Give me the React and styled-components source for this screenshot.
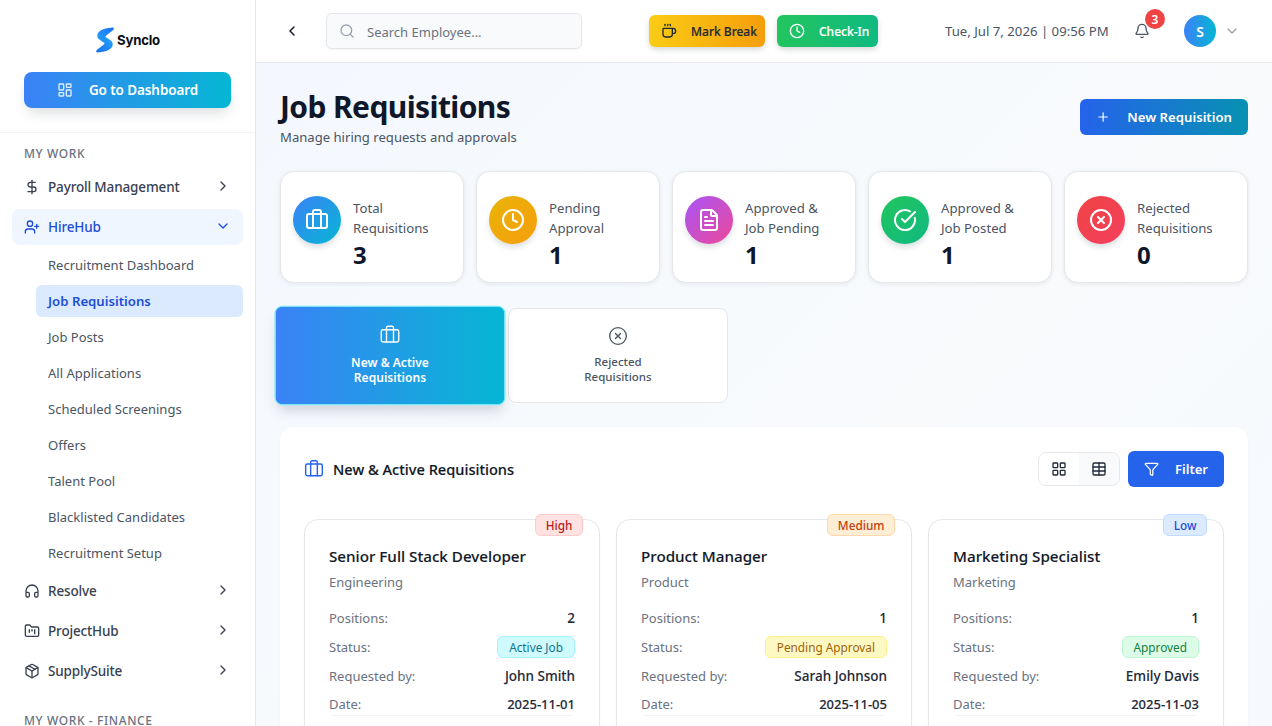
import React from "react";
import styled, { createGlobalStyle } from "styled-components";
import {
  Bell,
  Briefcase,
  ChevronDown,
  ChevronLeft,
  ChevronRight,
  CircleCheckBig,
  CircleX,
  Clock,
  Coffee,
  DollarSign,
  FileText,
  FolderKanban,
  Funnel,
  Headphones,
  LayoutDashboard,
  LayoutGrid,
  Package,
  Plus,
  Search,
  Table,
  UserPlus,
} from "lucide-react";

const GlobalStyle = createGlobalStyle`
  * { box-sizing: border-box; }
  html, body { margin: 0; padding: 0; height: 100%; overflow: hidden; }
  body { font-family: "Noto Sans", "Liberation Sans", sans-serif; color: #0f172a; }
`;

const Shell = styled.div`
  display: flex;
  width: 100%;
  height: 100vh;
  overflow: hidden;
`;

const Sidebar = styled.aside`
  width: 256px;
  flex-shrink: 0;
  background: #fff;
  border-right: 1px solid #e5e7eb;
  overflow: hidden;
`;

const Brand = styled.div`
  height: 133px;
  padding: 24px 24px 0;
  border-bottom: 1px solid #f1f5f9;
`;

const LogoRow = styled.div`
  height: 32px;
  display: flex;
  align-items: center;
  justify-content: center;
  gap: 3px;
  margin-bottom: 16px;
  padding-left: 1px;
`;

const LogoText = styled.span`
  font-family: "Inter", sans-serif;
  font-size: 13.2px;
  font-weight: 700;
  color: #0b0f19;
  letter-spacing: -0.2px;
  margin-top: -1px;
`;

const DashboardButton = styled.button`
  width: 207px;
  height: 36px;
  border: 0;
  border-radius: 8px;
  background: linear-gradient(90deg, #3b82f6, #06b6d4);
  color: #fff;
  font: 600 13.5px "Noto Sans", sans-serif;
  letter-spacing: -0.1px;
  display: flex;
  align-items: center;
  justify-content: center;
  gap: 16px;
  box-shadow: 0 8px 14px -4px rgba(15, 23, 42, 0.16);
  svg { opacity: 0.85; }
`;

const SectionLabel = styled.div`
  margin: ${(p) => p.$top}px 0 0 24px;
  height: 18px;
  line-height: 18px;
  font-size: 12px;
  font-weight: 500;
  letter-spacing: 0.6px;
  color: #6b7280;
`;

const Nav = styled.nav`
  padding: 0 12px;
  margin-top: ${(p) => p.$top || 0}px;
  display: flex;
  flex-direction: column;
`;

const NavItem = styled.div`
  height: 36px;
  margin-bottom: 4px;
  padding: 0 12px;
  border-radius: 8px;
  display: flex;
  align-items: center;
  gap: 8px;
  font-size: 13.5px;
  letter-spacing: -0.15px;
  font-weight: 500;
  color: ${(p) => (p.$open ? "#1d4ed8" : "#374151")};
  background: ${(p) => (p.$open ? "#eff6ff" : "transparent")};
  span { flex: 1; margin-top: -1px; }
  svg:last-child { margin-top: -3px; }
`;

const SubNav = styled.div`
  padding-left: 24px;
  display: flex;
  flex-direction: column;
`;

const SubItem = styled.div`
  height: 32px;
  margin-bottom: 4px;
  padding: 0 12px;
  border-radius: 6px;
  display: flex;
  align-items: center;
  font-size: ${(p) => (p.$active ? 13.2 : 13)}px;
  font-weight: ${(p) => (p.$active ? 600 : 400)};
  color: ${(p) => (p.$active ? "#1d4ed8" : "#4b5563")};
  background: ${(p) => (p.$active ? "#dbeafe" : "transparent")};
`;

const Column = styled.div`
  flex: 1;
  min-width: 0;
  display: flex;
  flex-direction: column;
`;

const Topbar = styled.header`
  height: 63px;
  flex-shrink: 0;
  background: #fff;
  border-bottom: 1px solid #e5e7eb;
  display: flex;
  align-items: center;
  padding: 0 0 0 28px;
  & > * { flex-shrink: 0; }
`;

const BackButton = styled.div`
  width: 16px;
  display: flex;
  color: #111827;
  margin-right: 26px;
`;

const SearchBox = styled.div`
  width: 256px;
  height: 36px;
  border: 1px solid #e5e7eb;
  border-radius: 6px;
  background: #f9fafb;
  box-shadow: 0 1px 2px rgba(15, 23, 42, 0.05);
  display: flex;
  align-items: center;
  gap: 12px;
  padding: 0 12px;
  svg { color: #9ca3af; }
`;

const SearchText = styled.span`
  margin-top: 2px;
  font-size: 13px;
  line-height: 20px;
  color: #6b7280;
`;

const ActionButton = styled.div`
  width: ${(p) => p.$w}px;
  height: 32px;
  border-radius: 6px;
  display: flex;
  align-items: center;
  font-size: 12px;
  font-weight: 500;
  white-space: nowrap;
  padding-left: 12px;
  gap: 14px;
  background: ${(p) => p.$bg};
  color: ${(p) => p.$color};
  margin-left: ${(p) => p.$left}px;
  box-shadow: 0 3px 6px -1px rgba(15, 23, 42, 0.2);
  -webkit-text-stroke: 0.2px currentColor;
`;

const DateText = styled.div`
  margin-left: 67px;
  width: 164px;
  font-size: 13.2px;
  color: #4b5563;
  white-space: nowrap;
`;

const BellWrap = styled.div`
  position: relative;
  margin-left: 25px;
  display: flex;
  color: #4b5563;
`;

const BellBadge = styled.span`
  position: absolute;
  top: -14px;
  left: 11px;
  width: 20px;
  height: 20px;
  border-radius: 50%;
  background: #ef4444;
  color: #fff;
  font-size: 12px;
  font-weight: 600;
  display: flex;
  align-items: center;
  justify-content: center;
`;

const Avatar = styled.div`
  margin-left: 34px;
  width: 32px;
  height: 32px;
  border-radius: 50%;
  background: linear-gradient(90deg, #3b82f6, #06b6d4);
  color: #fff;
  font-size: 14px;
  font-weight: 600;
  display: flex;
  align-items: center;
  justify-content: center;
`;

const AvatarCaret = styled.div`
  margin-left: 8px;
  display: flex;
  color: #9ca3af;
`;

const Main = styled.main`
  flex: 1;
  min-height: 0;
  overflow: hidden;
  padding: 24px 24px 0;
  background: linear-gradient(135deg, #f4f8fe 0%, #f8fafc 60%, #f6f9fe 100%);
`;

const PageHead = styled.div`
  display: flex;
  justify-content: space-between;
  align-items: flex-start;
  margin-bottom: 24px;
`;

const Title = styled.h1`
  margin: 0;
  font-size: 30px;
  line-height: 40px;
  font-weight: 700;
  letter-spacing: -0.6px;
  color: #0f172a;
`;

const SubTitle = styled.p`
  margin: 0;
  font-size: 13.1px;
  line-height: 20px;
  color: #4b5563;
`;

const NewButton = styled.div`
  margin-top: 12px;
  width: 168px;
  height: 36px;
  border-radius: 6px;
  background: linear-gradient(90deg, #2563eb, #0891b2);
  color: #fff;
  font-size: 13.2px;
  font-weight: 600;
  white-space: nowrap;
  display: flex;
  align-items: center;
  gap: 17px;
  padding: 0 16px;
`;

const StatsRow = styled.div`
  display: grid;
  grid-template-columns: repeat(5, 1fr);
  gap: 12px;
`;

const StatCard = styled.div`
  height: 112px;
  background: #fff;
  border: 1px solid #e5e7eb;
  border-radius: 14px;
  box-shadow: 0 1px 4px rgba(15, 23, 42, 0.08);
  padding: 24px 12px 0;
  display: flex;
  gap: 12px;
`;

const StatIcon = styled.div`
  width: 48px;
  height: 48px;
  flex-shrink: 0;
  border-radius: 50%;
  background: ${(p) => p.$bg};
  color: #fff;
  display: flex;
  align-items: center;
  justify-content: center;
  box-shadow: 0 4px 6px -1px rgba(15, 23, 42, 0.16);
`;

const StatBody = styled.div`
  margin-top: 2px;
`;

const StatLabel = styled.div`
  font-size: 13.2px;
  line-height: 20px;
  color: #4b5563;
`;

const StatValue = styled.div`
  margin-top: 3px;
  font-size: 24px;
  line-height: 28px;
  font-weight: 700;
  color: #0f172a;
`;

const Tabs = styled.div`
  display: flex;
  gap: 8px;
  margin-top: 24.5px;
`;

const Tab = styled.div`
  width: 220px;
  height: 95px;
  border-radius: 8px;
  display: flex;
  flex-direction: column;
  align-items: center;
  padding-top: 17px;
  font-size: 11.5px;
  line-height: 15px;
  text-align: center;
  font-weight: ${(p) => (p.$active ? 600 : 500)};
  color: ${(p) => (p.$active ? "#fff" : "#4b5563")};
  background: ${(p) => (p.$active ? "linear-gradient(90deg, #3b82f6, #06b6d4)" : "#fff")};
  border: 1px solid ${(p) => (p.$active ? "#67e8f9" : "#e5e7eb")};
  transform: ${(p) => (p.$active ? "scale(1.05)" : "none")};
  box-shadow: ${(p) => (p.$active ? "0 8px 12px -4px rgba(15, 23, 42, 0.18)" : "none")};
  svg { margin-bottom: 8px; }
`;

const Panel = styled.section`
  margin-top: 24.5px;
  min-height: 400px;
  background: #fff;
  border-radius: 14px;
  box-shadow: 0 1px 3px rgba(15, 23, 42, 0.03);
  padding: 24px;
`;

const PanelHead = styled.div`
  display: flex;
  align-items: center;
  height: 36px;
  margin-bottom: 32px;
`;

const PanelTitle = styled.h2`
  margin: 0;
  flex: 1;
  display: flex;
  align-items: center;
  gap: 9px;
  font-size: 14.6px;
  font-weight: 500;
  color: #111827;
  -webkit-text-stroke: 0.15px currentColor;
  svg { color: #2563eb; }
`;

const ViewToggle = styled.div`
  display: flex;
  height: 34px;
  width: 82px;
  border: 1px solid #e5e7eb;
  border-radius: 8px;
  overflow: hidden;
  margin-right: 8px;
`;

const ToggleCell = styled.div`
  flex: 1;
  display: flex;
  align-items: center;
  justify-content: center;
  color: #1f2937;
  background: ${(p) => (p.$muted ? "#f9fafb" : "#fff")};
`;

const FilterButton = styled.div`
  width: 96px;
  height: 36px;
  border-radius: 6px;
  background: #2563eb;
  color: #fff;
  font-size: 13px;
  font-weight: 600;
  display: flex;
  align-items: center;
  gap: 16px;
  padding: 0 16px;
`;

const CardGrid = styled.div`
  display: grid;
  grid-template-columns: repeat(3, 1fr);
  gap: 16px;
`;

const ReqCard = styled.article`
  position: relative;
  height: 260px;
  border: 1px solid #e5e7eb;
  border-radius: 14px;
  padding: 24px;
  background: #fff;
  box-shadow: 0 1px 2px rgba(15, 23, 42, 0.03);
`;

const Priority = styled.span`
  position: absolute;
  top: -6px;
  right: 16px;
  height: 22px;
  padding: 0 9.5px;
  border-radius: 6px;
  border: 1px solid ${(p) => p.$tone.border};
  background: ${(p) => p.$tone.bg};
  color: ${(p) => p.$tone.text};
  font-size: 11.8px;
  font-weight: 500;
  display: flex;
  align-items: center;
`;

const CardTitle = styled.h3`
  margin: 0;
  font-size: 15.2px;
  line-height: 24px;
  font-weight: 500;
  color: #111827;
  -webkit-text-stroke: 0.1px currentColor;
`;

const CardDept = styled.div`
  margin-top: 4px;
  font-size: 13px;
  line-height: 20px;
  color: #6b7280;
`;

const Details = styled.div`
  margin-top: 15px;
  display: flex;
  flex-direction: column;
  gap: 6.8px;
`;

const DetailRow = styled.div`
  height: 22px;
  display: flex;
  align-items: center;
  justify-content: space-between;
  font-size: 13px;
  color: #6b7280;
  ${(p) => p.$last && "box-shadow: 0 4px 0 -3px #f1f5f9;"}
`;

const DetailValue = styled.span`
  font-size: ${(p) => (p.$date ? 13 : 13.5)}px;
  font-weight: 500;
  color: #1f2937;
  -webkit-text-stroke: 0.1px currentColor;
`;

const StatusPill = styled.span`
  height: 22px;
  padding: 0 11px;
  border-radius: 6px;
  border: 1px solid ${(p) => p.$tone.border};
  background: ${(p) => p.$tone.bg};
  color: ${(p) => p.$tone.text};
  font-size: 11.8px;
  display: flex;
  align-items: center;
`;

const SynclogoMark = () => (
  <svg width="18" height="26" viewBox="0 0 18 26" fill="none">
    <defs>
      <linearGradient id="synTop" x1="1" y1="0" x2="0" y2="1">
        <stop offset="0" stopColor="#1d6ff2" />
        <stop offset="1" stopColor="#22a6f5" />
      </linearGradient>
      <linearGradient id="synBottom" x1="1" y1="0" x2="0" y2="1">
        <stop offset="0" stopColor="#1d6ff2" />
        <stop offset="1" stopColor="#22a6f5" />
      </linearGradient>
    </defs>
    <path
      d="M16.5.5C18 .4 18.3 2.2 17 3.2L10.2 8.6C9.2 9.5 9.4 10.6 10.5 11L12 12 7.5 15.5 3 12.2C.6 10.3 1 7 2.6 5.2 6 1.8 11.5.8 16.5.5Z"
      fill="url(#synTop)"
    />
    <path
      d="M16.5.5C18 .4 18.3 2.2 17 3.2L10.2 8.6C9.2 9.5 9.4 10.6 10.5 11L12 12 7.5 15.5 3 12.2C.6 10.3 1 7 2.6 5.2 6 1.8 11.5.8 16.5.5Z"
      fill="url(#synBottom)"
      transform="rotate(180 9 13)"
    />
  </svg>
);

const subLinks = [
  "Recruitment Dashboard",
  "Job Requisitions",
  "Job Posts",
  "All Applications",
  "Scheduled Screenings",
  "Offers",
  "Talent Pool",
  "Blacklisted Candidates",
  "Recruitment Setup",
];

const stats = [
  { icon: Briefcase, bg: "linear-gradient(135deg, #3b82f6, #06b6d4)", lines: ["Total", "Requisitions"], value: 3 },
  { icon: Clock, bg: "linear-gradient(135deg, #eab308, #f59e0b)", lines: ["Pending", "Approval"], value: 1 },
  { icon: FileText, bg: "linear-gradient(135deg, #a855f7, #ec4899)", lines: ["Approved &", "Job Pending"], value: 1 },
  { icon: CircleCheckBig, bg: "linear-gradient(135deg, #22c55e, #10b981)", lines: ["Approved &", "Job Posted"], value: 1 },
  { icon: CircleX, bg: "linear-gradient(135deg, #ef4444, #f43f5e)", lines: ["Rejected", "Requisitions"], value: 0 },
];

const tones = {
  high: { bg: "#fee2e2", border: "#fecaca", text: "#b91c1c" },
  medium: { bg: "#ffedd5", border: "#fed7aa", text: "#c2410c" },
  low: { bg: "#dbeafe", border: "#bfdbfe", text: "#1d4ed8" },
  active: { bg: "#cffafe", border: "#a5f3fc", text: "#0e7490" },
  pending: { bg: "#fef9c3", border: "#fef08a", text: "#a16207" },
  approved: { bg: "#dcfce7", border: "#bbf7d0", text: "#15803d" },
};

const requisitions = [
  { title: "Senior Full Stack Developer", dept: "Engineering", priority: "High", tone: "high", positions: 2, status: "Active Job", statusTone: "active", by: "John Smith", date: "2025-11-01" },
  { title: "Product Manager", dept: "Product", priority: "Medium", tone: "medium", positions: 1, status: "Pending Approval", statusTone: "pending", by: "Sarah Johnson", date: "2025-11-05" },
  { title: "Marketing Specialist", dept: "Marketing", priority: "Low", tone: "low", positions: 1, status: "Approved", statusTone: "approved", by: "Emily Davis", date: "2025-11-03" },
];

export default function App() {
  return (
    <Shell>
      <GlobalStyle />
      <Sidebar>
        <Brand>
          <LogoRow>
            <SynclogoMark />
            <LogoText>Synclo</LogoText>
          </LogoRow>
          <DashboardButton>
            <LayoutDashboard size={16} strokeWidth={2} />
            Go to Dashboard
          </DashboardButton>
        </Brand>
        <SectionLabel $top={12}>MY WORK</SectionLabel>
        <Nav $top={6}>
          <NavItem>
            <DollarSign size={16} />
            <span>Payroll Management</span>
            <ChevronRight size={16} />
          </NavItem>
          <NavItem $open>
            <UserPlus size={16} />
            <span>HireHub</span>
            <ChevronDown size={16} />
          </NavItem>
          <SubNav>
            {subLinks.map((link) => (
              <SubItem key={link} $active={link === "Job Requisitions"}>
                {link}
              </SubItem>
            ))}
          </SubNav>
          <NavItem>
            <Headphones size={16} />
            <span>Resolve</span>
            <ChevronRight size={16} />
          </NavItem>
          <NavItem>
            <FolderKanban size={16} />
            <span>ProjectHub</span>
            <ChevronRight size={16} />
          </NavItem>
          <NavItem>
            <Package size={16} />
            <span>SupplySuite</span>
            <ChevronRight size={16} />
          </NavItem>
        </Nav>
        <SectionLabel $top={19}>MY WORK - FINANCE</SectionLabel>
      </Sidebar>

      <Column>
        <Topbar>
          <BackButton>
            <ChevronLeft size={16} strokeWidth={2.2} />
          </BackButton>
          <SearchBox>
            <Search size={16} />
            <SearchText>Search Employee...</SearchText>
          </SearchBox>
          <ActionButton $w={116} $bg="linear-gradient(90deg, #facc15, #f59e0b)" $color="#1f2937" $left={67}>
            <Coffee size={16} />
            Mark Break
          </ActionButton>
          <ActionButton $w={101} $bg="linear-gradient(90deg, #22c55e, #10b981)" $color="#fff" $left={12}>
            <Clock size={16} />
            Check-In
          </ActionButton>
          <DateText>Tue, Jul 7, 2026 | 09:56 PM</DateText>
          <BellWrap>
            <Bell size={16} />
            <BellBadge>3</BellBadge>
          </BellWrap>
          <Avatar>S</Avatar>
          <AvatarCaret>
            <ChevronDown size={16} />
          </AvatarCaret>
        </Topbar>

        <Main>
          <PageHead>
            <div>
              <Title>Job Requisitions</Title>
              <SubTitle>Manage hiring requests and approvals</SubTitle>
            </div>
            <NewButton>
              <Plus size={16} />
              New Requisition
            </NewButton>
          </PageHead>

          <StatsRow>
            {stats.map((s) => (
              <StatCard key={s.lines.join()}>
                <StatIcon $bg={s.bg}>
                  <s.icon size={24} strokeWidth={2} />
                </StatIcon>
                <StatBody>
                  <StatLabel>
                    {s.lines[0]}
                    <br />
                    {s.lines[1]}
                  </StatLabel>
                  <StatValue>{s.value}</StatValue>
                </StatBody>
              </StatCard>
            ))}
          </StatsRow>

          <Tabs>
            <Tab $active>
              <Briefcase size={20} strokeWidth={1.6} />
              New &amp; Active
              <br />
              Requisitions
            </Tab>
            <Tab>
              <CircleX size={20} strokeWidth={1.6} />
              Rejected
              <br />
              Requisitions
            </Tab>
          </Tabs>

          <Panel>
            <PanelHead>
              <PanelTitle>
                <Briefcase size={20} strokeWidth={1.7} />
                New &amp; Active Requisitions
              </PanelTitle>
              <ViewToggle>
                <ToggleCell>
                  <LayoutGrid size={16} />
                </ToggleCell>
                <ToggleCell $muted>
                  <Table size={16} />
                </ToggleCell>
              </ViewToggle>
              <FilterButton>
                <Funnel size={16} />
                Filter
              </FilterButton>
            </PanelHead>

            <CardGrid>
              {requisitions.map((r) => (
                <ReqCard key={r.title}>
                  <Priority $tone={tones[r.tone]}>{r.priority}</Priority>
                  <CardTitle>{r.title}</CardTitle>
                  <CardDept>{r.dept}</CardDept>
                  <Details>
                    <DetailRow>
                      Positions:
                      <DetailValue>{r.positions}</DetailValue>
                    </DetailRow>
                    <DetailRow>
                      Status:
                      <StatusPill $tone={tones[r.statusTone]}>{r.status}</StatusPill>
                    </DetailRow>
                    <DetailRow>
                      Requested by:
                      <DetailValue>{r.by}</DetailValue>
                    </DetailRow>
                    <DetailRow $last>
                      Date:
                      <DetailValue $date>{r.date}</DetailValue>
                    </DetailRow>
                  </Details>
                </ReqCard>
              ))}
            </CardGrid>
          </Panel>
        </Main>
      </Column>
    </Shell>
  );
}
